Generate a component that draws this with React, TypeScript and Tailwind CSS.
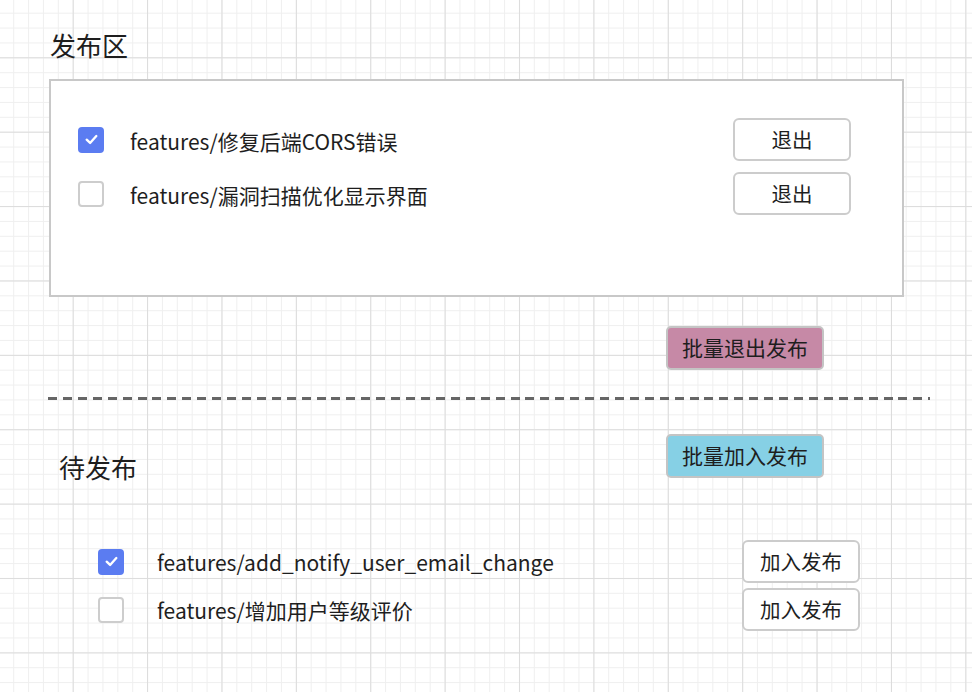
import React, { useState } from 'react'

type Branch = { id: number; name: string; checked: boolean }

function CheckBox({ checked, onClick }: { checked: boolean; onClick: () => void }) {
  if (checked) {
    return (
      <button onClick={onClick} className="flex h-[26px] w-[26px] shrink-0 items-center justify-center rounded-[4px] bg-[#5b7cf1]">
        <svg width="15" height="15" viewBox="0 0 14 14" fill="none">
          <path d="M2.5 7.2 L5.7 10.2 L11.5 3.8" stroke="white" strokeWidth="2.2" strokeLinecap="round" strokeLinejoin="round" />
        </svg>
      </button>
    )
  }
  return (
    <button onClick={onClick} className="h-[26px] w-[26px] shrink-0 rounded-[4px] border-2 border-[#cdcdcd] bg-white" />
  )
}

export default function App() {
  const [published, setPublished] = useState<Branch[]>([
    { id: 1, name: 'features/修复后端CORS错误', checked: true },
    { id: 2, name: 'features/漏洞扫描优化显示界面', checked: false },
  ])
  const [pending, setPending] = useState<Branch[]>([
    { id: 3, name: 'features/add_notify_user_email_change', checked: true },
    { id: 4, name: 'features/增加用户等级评价', checked: false },
  ])

  const toggle = (list: Branch[], set: (b: Branch[]) => void, id: number) =>
    set(list.map((b) => (b.id === id ? { ...b, checked: !b.checked } : b)))

  return (
    <div
      className="h-[692px] w-[972px] overflow-hidden bg-white pt-[28px] font-['Noto_Sans_CJK_SC',sans-serif] text-[#1e1e1e]
        bg-[linear-gradient(to_right,#dcdcdc_1px,transparent_1px),linear-gradient(to_bottom,#dcdcdc_1px,transparent_1px),linear-gradient(to_right,#efefef_1px,transparent_1px),linear-gradient(to_bottom,#efefef_1px,transparent_1px)]
        bg-size-[74.4px_74.4px,74.4px_74.4px,14.88px_14.88px,14.88px_14.88px]
        bg-position-[72.7px_0,0_57.3px,13.2px_0,0_12.7px]"
    >
      <h2 className="pl-[50px] text-[26px] leading-[34px] font-normal">发布区</h2>

      {/* published panel */}
      <div className="ml-[49px] mt-[17px] h-[218px] w-[855px] border-2 border-[#c8c8c8] bg-white pl-[27px] pr-[51px] pt-[37px]">
        <div className="flex flex-col gap-[11px]">
          {published.map((b) => (
            <div key={b.id} className="flex items-center">
              <CheckBox checked={b.checked} onClick={() => toggle(published, setPublished, b.id)} />
              <span className="ml-[26px] mt-[2px] text-[21px] leading-[28px]">{b.name}</span>
              <button className="ml-auto h-[43px] w-[118px] rounded-[6px] border-2 border-[#cccccc] bg-white text-[20.5px]">
                退出
              </button>
            </div>
          ))}
        </div>
      </div>

      <button className="ml-[666px] mt-[29px] h-[44px] w-[158px] rounded-[5px] border-2 border-[#c4c4c4] bg-[#c689a6] text-[21px]">
        批量退出发布
      </button>

      <div className="ml-[48px] mt-[27px] h-[3px] w-[882px] bg-[repeating-linear-gradient(to_right,#666666_0_9px,transparent_9px_14.92px)]" />

      <div className="mt-[34px] flex items-start">
        <h2 className="mt-[16px] w-[666px] pl-[59px] text-[26px] leading-[34px] font-normal">待发布</h2>
        <button className="h-[44px] w-[158px] rounded-[5px] border-2 border-[#c4c4c4] bg-[#86d0e5] text-[21px]">
          批量加入发布
        </button>
      </div>

      <div className="ml-[98px] mt-[56px] flex w-[762px] flex-col gap-[5px]">
        {pending.map((b) => (
          <div key={b.id} className="flex items-center">
            <CheckBox checked={b.checked} onClick={() => toggle(pending, setPending, b.id)} />
            <span className="ml-[33px] text-[21px] leading-[28px]">{b.name}</span>
            <button className="ml-auto h-[43px] w-[118px] rounded-[6px] border-2 border-[#cccccc] bg-white text-[20.5px]">
              加入发布
            </button>
          </div>
        ))}
      </div>
    </div>
  )
}
